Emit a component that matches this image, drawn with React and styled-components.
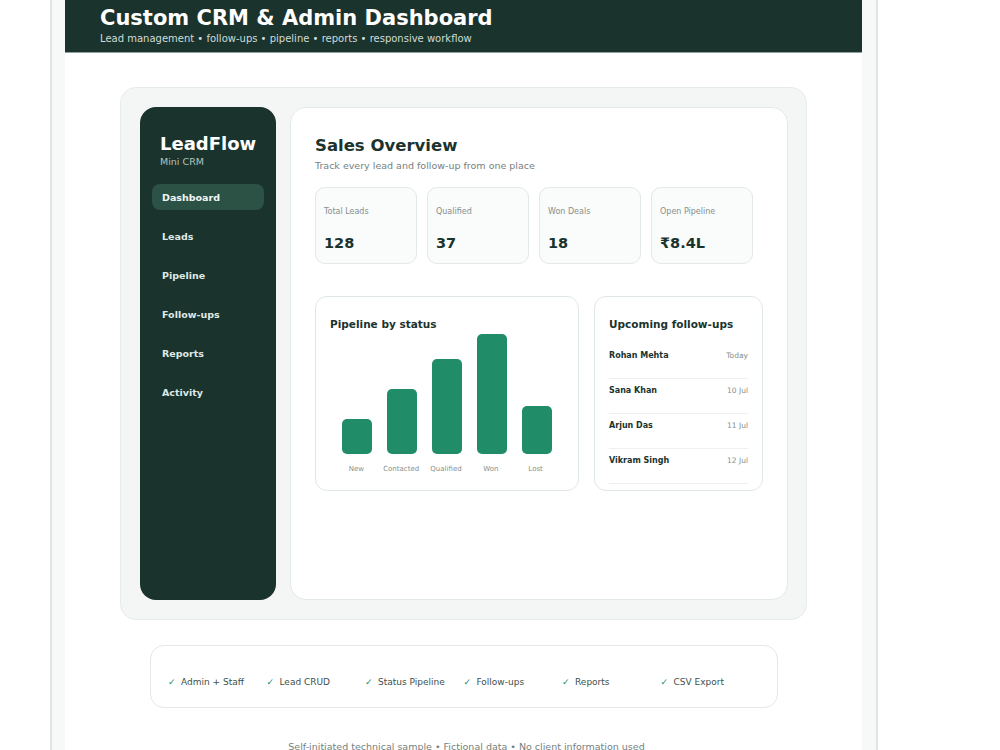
import React from 'react'
import styled, { createGlobalStyle } from 'styled-components'

const GlobalStyle = createGlobalStyle`
  html, body {
    margin: 0;
    padding: 0;
    height: 750px;
    overflow: hidden;
    background: #ffffff;
    font-family: "DejaVu Sans", Verdana, sans-serif;
  }
  * { box-sizing: border-box; }
`

const Frame = styled.div`
  width: 828px;
  height: 750px;
  margin-left: 50px;
  padding: 0 14px 0 13px;
  background: #f7f9f8;
  border-left: 2px solid #dfe7e5;
  border-right: 2px solid #dfe7e5;
`
const Sheet = styled.div`
  height: 750px;
  background: #ffffff;
  display: flex;
  flex-direction: column;
`
const Header = styled.header`
  height: 53px;
  flex: none;
  padding: 6px 35px 0;
  background: #1b332d;
  border-bottom: 1px solid #8fa39e;
`
const Title = styled.h1`
  margin: 0;
  font-size: 21px;
  line-height: 25px;
  font-weight: 700;
  color: #ffffff;
`
const Subtitle = styled.p`
  margin: 1px 0 0;
  font-size: 10px;
  line-height: 14px;
  color: #cfdcd8;
`
const Mock = styled.section`
  width: 687px;
  height: 533px;
  flex: none;
  margin: 34px 0 0 55px;
  padding: 19px;
  display: flex;
  gap: 14px;
  background: #f4f6f5;
  border: 1px solid #e6ecea;
  border-radius: 16px;
`
const Sidebar = styled.aside`
  width: 136px;
  flex: none;
  padding: 27px 12px;
  background: #1b332d;
  border-radius: 16px;
`
const Brand = styled.div`
  padding-left: 8px;
  font-size: 18px;
  line-height: 20px;
  font-weight: 700;
  color: #ffffff;
`
const BrandSub = styled.div`
  padding-left: 8px;
  margin-top: 2px;
  font-size: 9.5px;
  line-height: 12px;
  color: #b4c4bf;
`
const Nav = styled.nav`
  margin-top: 16px;
  display: flex;
  flex-direction: column;
  gap: 13px;
`
const NavItem = styled.div`
  height: 26px;
  padding-left: 10px;
  display: flex;
  align-items: center;
  font-size: 9.5px;
  font-weight: 700;
  color: ${p => (p.$active ? '#f2f6f4' : '#dfe8e5')};
  background: ${p => (p.$active ? '#2b5244' : 'transparent')};
  border-radius: 8px;
`
const Main = styled.main`
  flex: 1;
  padding: 28px 24px;
  background: #ffffff;
  border: 1px solid #e3e9e7;
  border-radius: 16px;
`
const Heading = styled.h2`
  margin: 0;
  font-size: 16.5px;
  line-height: 20px;
  font-weight: 700;
  color: #1b332d;
`
const HeadingSub = styled.p`
  margin: 3px 0 0;
  font-size: 9.5px;
  line-height: 13px;
  color: #75817e;
`
const Stats = styled.div`
  margin-top: 15px;
  display: flex;
  gap: 10px;
`
const StatCard = styled.div`
  width: 102px;
  height: 77px;
  padding: 18px 8px 0;
  background: #fafbfb;
  border: 1px solid #e3e9e7;
  border-radius: 10px;
`
const StatLabel = styled.div`
  font-size: 8px;
  line-height: 11px;
  color: #84908d;
`
const StatValue = styled.div`
  margin-top: 17px;
  font-size: 14.5px;
  line-height: 18px;
  font-weight: 700;
  color: #1b332d;
`
const Panels = styled.div`
  margin-top: 32px;
  display: flex;
  gap: 15px;
`
const Panel = styled.div`
  width: ${p => p.$width}px;
  height: 195px;
  flex: none;
  padding: 21px 14px 0;
  background: #ffffff;
  border: 1px solid #e0e8e6;
  border-radius: 12px;
`
const PanelTitle = styled.h3`
  margin: 0;
  font-size: 10.5px;
  line-height: 13px;
  font-weight: 700;
  color: #1b332d;
`
const Chart = styled.div`
  height: 120px;
  margin: 3px 0 0 12px;
  display: flex;
  align-items: flex-end;
  gap: 15px;
`
const Bar = styled.div`
  width: 30px;
  height: ${p => p.$height}px;
  flex: none;
  background: #218c68;
  border-radius: 5px;
`
const ChartLabels = styled.div`
  margin: 10px 0 0 4px;
  display: flex;
`
const ChartLabel = styled.div`
  width: 44.8px;
  text-align: center;
  font-size: 7px;
  line-height: 10px;
  color: #84908d;
  white-space: nowrap;
`
const FollowList = styled.div`
  margin-top: 13px;
`
const FollowRow = styled.div`
  height: 35px;
  padding-bottom: 11px;
  display: flex;
  align-items: center;
  justify-content: space-between;
  border-bottom: 1px solid #ecf0ef;
`
const FollowName = styled.span`
  font-size: 8px;
  font-weight: 700;
  color: #1b332d;
`
const FollowDate = styled.span`
  font-size: 7.5px;
  color: #84908d;
`
const Features = styled.div`
  width: 628px;
  height: 63px;
  flex: none;
  margin: 25px 0 0 85px;
  padding: 29px 17px 0;
  display: grid;
  grid-template-columns: repeat(6, 98.5px);
  background: #ffffff;
  border: 1px solid #e3e9e7;
  border-radius: 14px;
`
const Feature = styled.div`
  display: flex;
  align-items: center;
  gap: 6px;
  height: 13px;
  font-size: 9px;
  color: #3e4f4b;
  white-space: nowrap;
`
const Check = styled.span`
  width: 7px;
  font-size: 9px;
  color: #218c68;
`
const Footer = styled.footer`
  margin-top: 32px;
  padding-left: 6px;
  text-align: center;
  font-size: 9.5px;
  line-height: 13px;
  color: #75817e;
`

const navItems = ['Dashboard', 'Leads', 'Pipeline', 'Follow-ups', 'Reports', 'Activity']
const stats = [
  { label: 'Total Leads', value: '128' },
  { label: 'Qualified', value: '37' },
  { label: 'Won Deals', value: '18' },
  { label: 'Open Pipeline', value: '₹8.4L' }
]
const bars = [
  { label: 'New', height: 35 },
  { label: 'Contacted', height: 65 },
  { label: 'Qualified', height: 95 },
  { label: 'Won', height: 120 },
  { label: 'Lost', height: 48 }
]
const followUps = [
  { name: 'Rohan Mehta', date: 'Today' },
  { name: 'Sana Khan', date: '10 Jul' },
  { name: 'Arjun Das', date: '11 Jul' },
  { name: 'Vikram Singh', date: '12 Jul' }
]
const features = ['Admin + Staff', 'Lead CRUD', 'Status Pipeline', 'Follow-ups', 'Reports', 'CSV Export']

export default function App () {
  return (
    <>
      <GlobalStyle />
      <Frame>
        <Sheet>
          <Header>
            <Title>Custom CRM &amp; Admin Dashboard</Title>
            <Subtitle>Lead management • follow-ups • pipeline • reports • responsive workflow</Subtitle>
          </Header>
          <Mock>
            <Sidebar>
              <Brand>LeadFlow</Brand>
              <BrandSub>Mini CRM</BrandSub>
              <Nav>
                {navItems.map((item, i) => (
                  <NavItem key={item} $active={i === 0}>{item}</NavItem>
                ))}
              </Nav>
            </Sidebar>
            <Main>
              <Heading>Sales Overview</Heading>
              <HeadingSub>Track every lead and follow-up from one place</HeadingSub>
              <Stats>
                {stats.map(s => (
                  <StatCard key={s.label}>
                    <StatLabel>{s.label}</StatLabel>
                    <StatValue>{s.value}</StatValue>
                  </StatCard>
                ))}
              </Stats>
              <Panels>
                <Panel $width={264}>
                  <PanelTitle>Pipeline by status</PanelTitle>
                  <Chart>
                    {bars.map(b => <Bar key={b.label} $height={b.height} />)}
                  </Chart>
                  <ChartLabels>
                    {bars.map(b => <ChartLabel key={b.label}>{b.label}</ChartLabel>)}
                  </ChartLabels>
                </Panel>
                <Panel $width={169}>
                  <PanelTitle>Upcoming follow-ups</PanelTitle>
                  <FollowList>
                    {followUps.map(f => (
                      <FollowRow key={f.name}>
                        <FollowName>{f.name}</FollowName>
                        <FollowDate>{f.date}</FollowDate>
                      </FollowRow>
                    ))}
                  </FollowList>
                </Panel>
              </Panels>
            </Main>
          </Mock>
          <Features>
            {features.map(f => (
              <Feature key={f}>
                <Check>✓</Check>
                {f}
              </Feature>
            ))}
          </Features>
          <Footer>Self-initiated technical sample • Fictional data • No client information used</Footer>
        </Sheet>
      </Frame>
    </>
  )
}
